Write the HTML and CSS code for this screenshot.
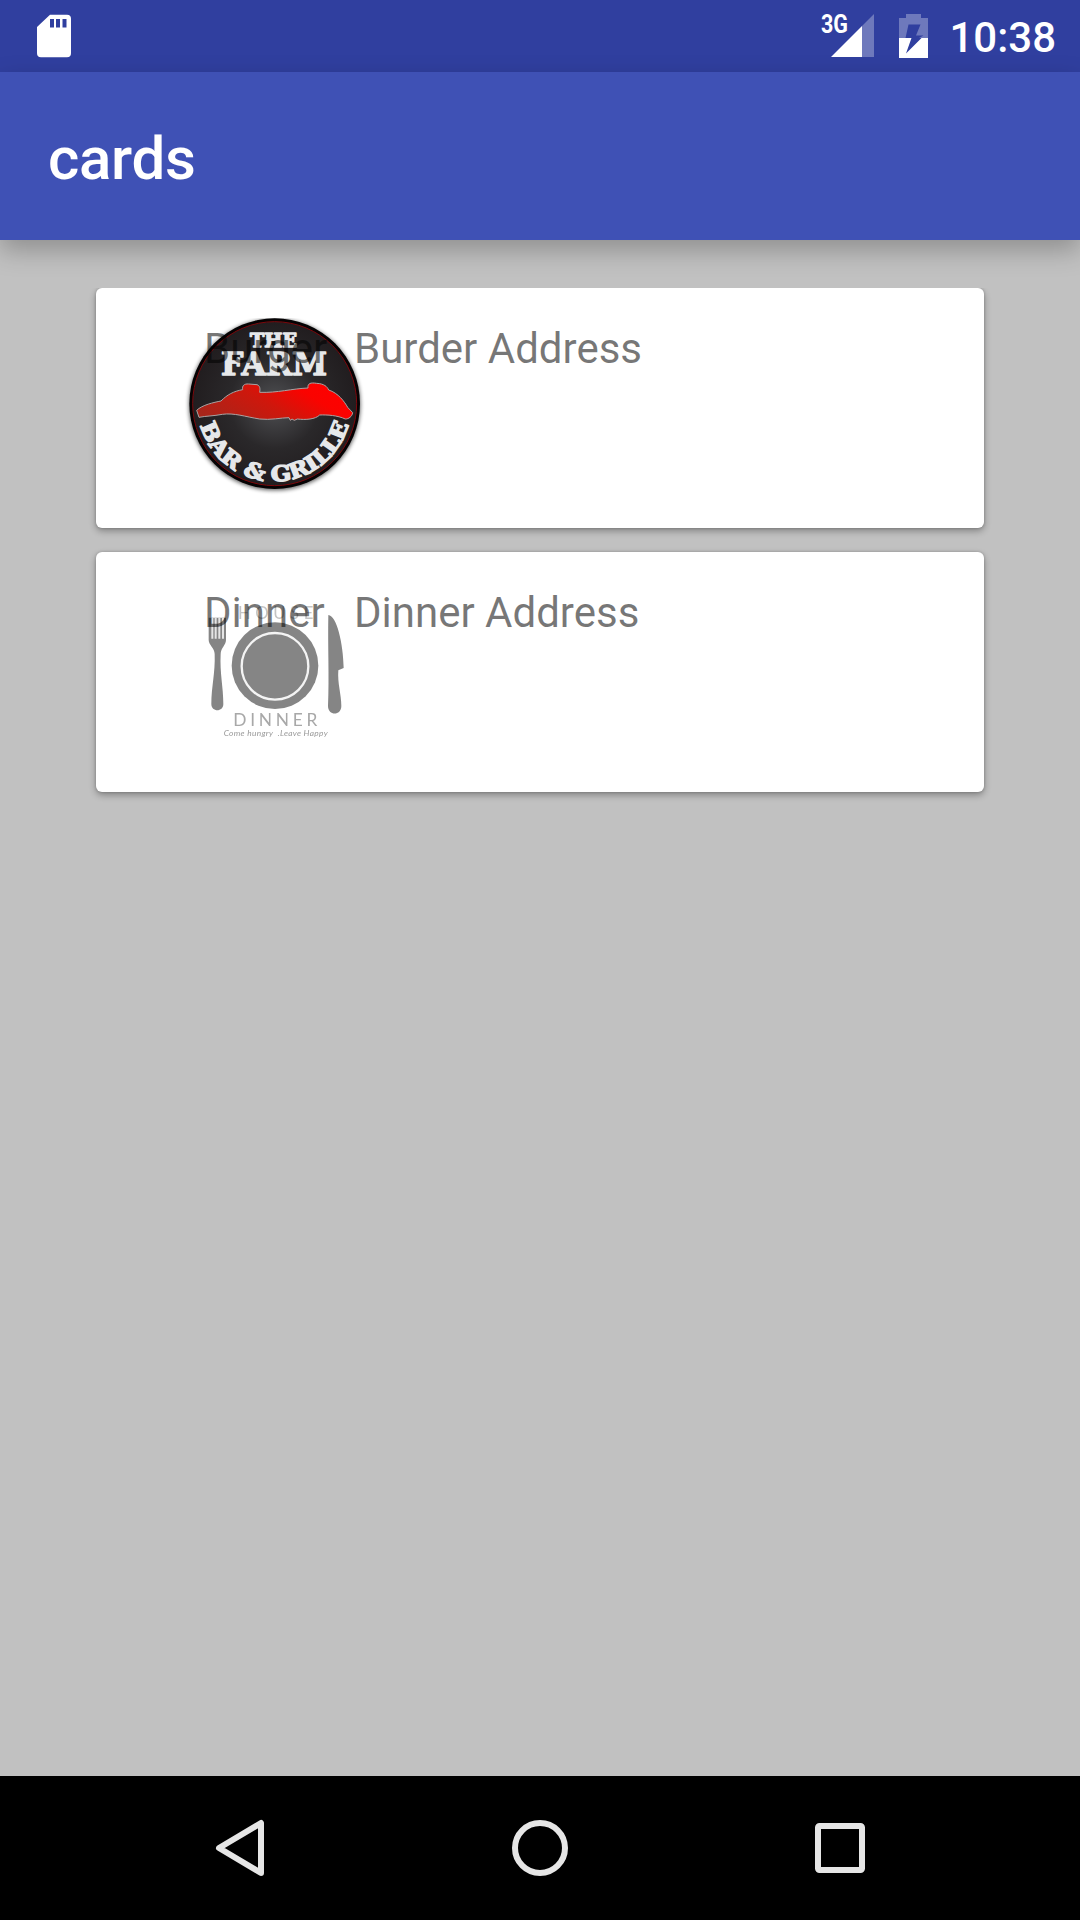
FILE: index.html
```html
<!DOCTYPE html>
<html lang="en">
<head>
<meta charset="utf-8">
<title>cards</title>
<link rel="stylesheet" href="styles.css">
</head>
<body>
<div class="screen">
  <header class="status-bar">
    <svg class="sd-icon" viewBox="0 0 34 44" width="34" height="44"><path fill="#fff" fill-rule="evenodd" d="M13 .7H30q4 0 4 4V39.200q0 4-4 4H4q-4 0-4-4V13ZM13 5v8.500h4V5ZM19 5v8.500h4V5ZM25.500 5v8.500h4V5Z"/></svg>
    <div class="status-right">
      <svg class="signal-icon" viewBox="0 0 54 44" width="54" height="44">
        <path fill="#fff" fill-opacity=".3" d="M54 0V43H42V12Z"/>
        <path fill="#fff" d="M42 12V43H11Z"/>
        <text class="signal-label" x="1" y="19.300" textLength="27" lengthAdjust="spacingAndGlyphs">3G</text>
      </svg>
      <svg class="battery-icon" viewBox="0 0 29 44" width="29" height="44">
        <path fill="#fff" fill-opacity=".3" d="M7 0H22V4H29V24H20L24.500 21.500H17L21.500 10.500H9.500L6.500 24H0V4H7Z"/>
        <path fill="#fff" d="M0 24H12.500L7 39.500L22.500 24H29V44H0Z"/>
      </svg>
      <span class="clock">10:38</span>
    </div>
  </header>
  <div class="app-bar"><h1>cards</h1></div>
  <main class="content">
    <div class="card-list">
      <article class="card">
        <svg class="logo farm-logo" viewBox="0 0 600 600" width="200" height="200">
          <defs>
            <radialGradient id="plate"><stop offset="0" stop-color="#505154"/><stop offset=".55" stop-color="#2a282a"/><stop offset="1" stop-color="#211d1f"/></radialGradient>
            <linearGradient id="pig" x1="0" y1=".7" x2="1" y2=".3"><stop offset="0" stop-color="#a8251a"/><stop offset=".45" stop-color="#cf170c"/><stop offset=".75" stop-color="#fa0300"/><stop offset="1" stop-color="#f00"/></linearGradient>
            <filter id="soft" x="-10%" y="-10%" width="120%" height="120%"><feGaussianBlur stdDeviation="6"/></filter>
            <clipPath id="frame"><path d="M40 54H585V590H40Z"/></clipPath>
            <path id="arc" d="M91 376A231 231 0 0 0 537 370"/>
          </defs>
          <g clip-path="url(#frame)">
            <circle cx="314" cy="314" r="257" fill="#000" opacity=".65" filter="url(#soft)"/>
            <circle cx="314" cy="311" r="256" fill="#050304"/>
            <circle cx="314" cy="311" r="246" fill="url(#plate)" stroke="#7c080c" stroke-width="3"/>
          </g>
          <path d="M80 331C96 315 132 307 153 303C172 284 190 274 218 269C216 257 222 251 236 252L261 254C270 257 271 266 269 277C322 279 366 266 414 264C412 250 422 247 440 250C462 251 472 260 476 270C505 279 524 306 533 322L548 338C546 350 536 357 526 357C502 346 472 344 449 345C436 358 407 360 382 357L373 361L366 357L361 361L357 353C333 353 301 361 269 357C225 350 192 338 157 343C131 348 107 348 87 352Z" fill="url(#pig)" stroke="#aaa3a3" stroke-width="3"/>
          <g class="farm-type">
            <text x="240" y="141" font-size="58" textLength="141" lengthAdjust="spacingAndGlyphs">THE</text>
            <text x="153" y="225" font-size="94" textLength="318" lengthAdjust="spacingAndGlyphs">FARM</text>
            <text font-size="64"><textPath href="#arc" textLength="600" lengthAdjust="spacingAndGlyphs">BAR &amp; GRILLE</textPath></text>
          </g>
        </svg>
        <span class="name">Burger</span>
        <span class="address">Burder Address</span>
      </article>
      <article class="card">
        <svg class="logo dinner-logo" viewBox="0 0 540 510" width="180" height="170">
          <defs><filter id="edge"><feGaussianBlur stdDeviation="2"/></filter></defs>
          <g filter="url(#edge)">
            <g fill="#858585">
              <circle cx="285" cy="257" r="130"/>
              <path d="M86 113H138V180C138 195 122 204 122 222C119 280 130 320 130 372C130 397 94 397 94 372C94 320 106 280 104 222C104 204 86 195 86 180Z"/>
              <path d="M445 105C470 107 490 190 491 264L475 271C472 310 484 343 484 378C484 408 444 408 444 378C448 290 443 200 445 105Z"/>
            </g>
            <circle cx="285" cy="259" r="100" fill="none" stroke="#f4f4f4" stroke-width="7"/>
            <path d="M97 113V176M107 113V176M118 113V176M129 113V176" stroke="#e5e5e5" stroke-width="6"/>
            <g class="dinner-type">
              <text class="house" x="174" y="117" font-size="50" textLength="226">HOUSE</text>
              <text x="160" y="437" font-size="52" textLength="252">DINNER</text>
              <text class="tagline" x="131" y="468" font-size="25" textLength="312" xml:space="preserve">Come hungry  .Leave Happy</text>
            </g>
          </g>
        </svg>
        <span class="name">Dinner</span>
        <span class="address">Dinner Address</span>
      </article>
    </div>
  </main>
  <nav class="nav-bar">
    <svg viewBox="0 0 60 60" width="60" height="60"><path d="M51 5V55L9 30Z"/></svg>
    <svg viewBox="0 0 60 60" width="60" height="60"><circle cx="30" cy="30" r="25"/></svg>
    <svg viewBox="0 0 60 60" width="60" height="60"><rect x="8" y="8" width="44" height="44" rx="1.500"/></svg>
  </nav>
</div>
</body>
</html>
```
FILE: styles.css
```css
* { box-sizing: border-box; }
body {
  margin: 0;
  font-family: Roboto, sans-serif;
}
.screen {
  width: 1080px;
  height: 1920px;
  display: flex;
  flex-direction: column;
  background: #c1c1c1;
  overflow: hidden;
}
.status-bar {
  height: 72px;
  padding: 14px 24px 0 37px;
  display: flex;
  justify-content: space-between;
  align-items: flex-start;
  background: #303f9f;
}
.status-right { display: flex; }
.signal-icon {
  margin-right: 25px;
  overflow: visible;
}
.battery-icon { margin-right: 21px; }
.signal-label {
  font-family: Roboto, sans-serif;
  font-size: 25px;
  font-weight: 700;
  fill: #fff;
}
.clock {
  color: #fff;
  font-size: 42px;
  font-weight: 500;
  line-height: 48px;
}
.app-bar {
  height: 168px;
  padding: 5px 48px 0;
  display: flex;
  align-items: center;
  background: #3f51b5;
  box-shadow: 0 10px 24px rgba(0, 0, 0, .26);
  z-index: 1;
}
.app-bar h1 {
  margin: 0;
  color: #fff;
  font-size: 60px;
  font-weight: 500;
  line-height: 70px;
  letter-spacing: -.3px;
}
.content {
  flex: 1;
  padding: 48px 72px;
}
.card-list {
  display: flex;
  flex-direction: column;
  gap: 24px;
  padding: 0 24px 24px;
  overflow: hidden;
}
.card {
  position: relative;
  height: 240px;
  padding: 36px 108px;
  display: grid;
  grid-template-columns: 150px 1fr;
  background: #fff;
  border-radius: 6px;
  box-shadow: 0 3px 7px rgba(0, 0, 0, .32), 0 0 3px rgba(0, 0, 0, .2);
  color: rgba(0, 0, 0, .54);
  font-size: 42px;
  line-height: 49px;
}
/* The artwork sits beneath the text it overlaps. */
.logo { position: absolute; }
.farm-logo { left: 74px; top: 12px; }
.dinner-logo { left: 84px; top: 28px; }
.name, .address {
  position: relative;
  white-space: nowrap;
}
.farm-type {
  font-family: "DejaVu Serif", serif;
  font-weight: 700;
  fill: #e6e8ea;
  stroke: #e6e8ea;
  stroke-width: 4px;
  stroke-linejoin: round;
}
.dinner-type {
  font-family: Lato, sans-serif;
  font-weight: 400;
  fill: #a8a8a8;
}
.house { fill: #c4c4c4; }
.tagline {
  font-style: italic;
  fill: #999;
}
.nav-bar {
  height: 144px;
  padding: 0 210px;
  display: flex;
  justify-content: space-between;
  align-items: center;
  background: #000;
}
.nav-bar svg {
  fill: none;
  stroke: #e6e6e6;
  stroke-width: 6px;
  stroke-linejoin: round;
}
```
